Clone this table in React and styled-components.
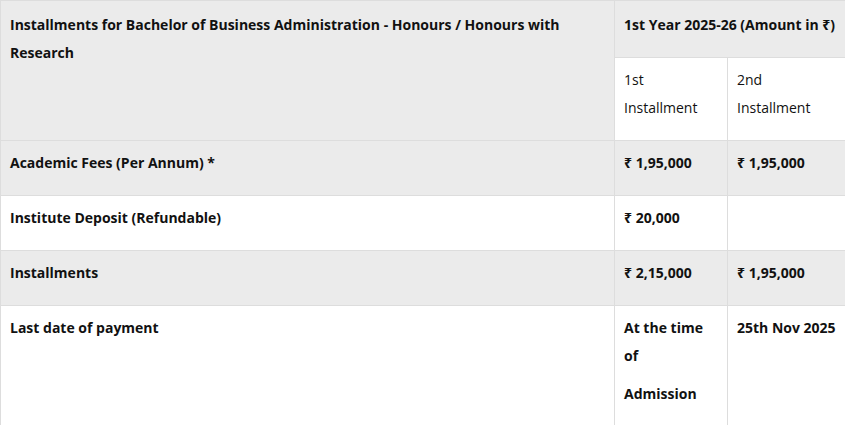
import React from "react";
import styled, { createGlobalStyle } from "styled-components";

const Global = createGlobalStyle`
  html, body {
    margin: 0;
    padding: 0;
    overflow: hidden;
    background: #ffffff;
  }
  body {
    font-family: "Open Sans", "Noto Sans", "DejaVu Sans", sans-serif;
    font-size: 14px;
    line-height: 28px;
    color: #111111;
  }
`;

const Table = styled.table`
  border-collapse: collapse;
  table-layout: fixed;
  width: 848px;
`;

const Row = styled.tr`
  background: ${(p) => (p.$shade ? "#ebebeb" : "#ffffff")};
`;

const HeadCell = styled.th`
  border: 1px solid #dddddd;
  padding: ${(p) => (p.$top ? "10px 9px 8px" : "8px 9px")};
  text-align: left;
  vertical-align: top;
  font-weight: ${(p) => (p.$light ? 400 : 700)};
  background: ${(p) => (p.$white ? "#ffffff" : "transparent")};
`;

const Cell = styled.td`
  border: 1px solid #dddddd;
  padding: 8px 9px;
  text-align: left;
  vertical-align: top;
  font-weight: 700;
`;

const P = styled.p`
  margin: 0 0 10px;
`;

const rows = [
  { label: "Academic Fees (Per Annum) *", a: "₹ 1,95,000", b: "₹ 1,95,000", shade: true },
  { label: "Institute Deposit (Refundable)", a: "₹ 20,000", b: "", shade: false },
  { label: "Installments", a: "₹ 2,15,000", b: "₹ 1,95,000", shade: true },
];

export default function App() {
  return (
    <>
      <Global />
      <Table>
        <colgroup>
          <col style={{ width: 614 }} />
          <col style={{ width: 113 }} />
          <col style={{ width: 121 }} />
        </colgroup>
        <thead>
          <Row $shade>
            <HeadCell $top rowSpan={2}>
              <P>
                Installments for Bachelor of Business Administration - Honours /
                Honours with Research
              </P>
            </HeadCell>
            <HeadCell $top colSpan={2}>
              <P>1st Year 2025-26 (Amount in ₹)</P>
            </HeadCell>
          </Row>
          <Row $shade>
            <HeadCell $light $white>
              <P>1st Installment</P>
            </HeadCell>
            <HeadCell $light $white>
              <P>2nd Installment</P>
            </HeadCell>
          </Row>
        </thead>
        <tbody>
          {rows.map((r) => (
            <Row key={r.label} $shade={r.shade}>
              <Cell>
                <P>{r.label}</P>
              </Cell>
              <Cell>{r.a && <P>{r.a}</P>}</Cell>
              <Cell>{r.b && <P>{r.b}</P>}</Cell>
            </Row>
          ))}
          <Row>
            <Cell>
              <P>Last date of payment</P>
            </Cell>
            <Cell>
              <P>At the time of</P>
              <P>Admission</P>
            </Cell>
            <Cell>
              <P>25th Nov 2025</P>
            </Cell>
          </Row>
        </tbody>
      </Table>
    </>
  );
}
